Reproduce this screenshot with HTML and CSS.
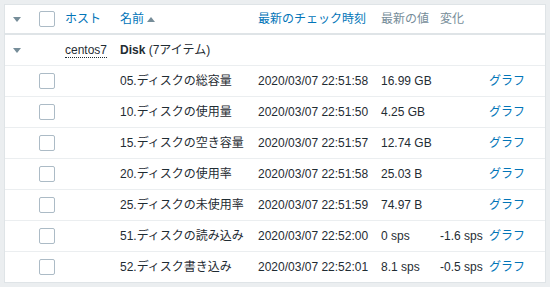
FILE: index.html
```html
<!DOCTYPE html>
<html>
<head>
<meta charset="UTF-8">
<title>最新データ</title>
<link rel="stylesheet" href="styles.css">
</head>
<body>
<div class="panel">
<table class="list">
<colgroup>
<col class="c-tog"><col class="c-cb"><col class="c-host"><col class="c-name"><col class="c-time"><col class="c-val"><col class="c-chg"><col class="c-graph">
</colgroup>
<thead>
<tr>
<th><span class="arrow"></span></th>
<th><span class="cb"></span></th>
<th><a href="#">ホスト</a></th>
<th><a href="#">名前</a><span class="sort"></span></th>
<th><a href="#">最新のチェック時刻</a></th>
<th class="plain">最新の値</th>
<th class="plain">変化</th>
<th></th>
</tr>
</thead>
<tbody>
<tr class="group">
<td><span class="arrow"></span></td>
<td></td>
<td><span class="host">centos7</span></td>
<td colspan="5"><b>Disk</b> (7アイテム)</td>
</tr>
<tr><td></td><td><span class="cb"></span></td><td></td><td>05.ディスクの総容量</td><td>2020/03/07 22:51:58</td><td>16.99 GB</td><td></td><td><a href="#">グラフ</a></td></tr>
<tr><td></td><td><span class="cb"></span></td><td></td><td>10.ディスクの使用量</td><td>2020/03/07 22:51:50</td><td>4.25 GB</td><td></td><td><a href="#">グラフ</a></td></tr>
<tr><td></td><td><span class="cb"></span></td><td></td><td>15.ディスクの空き容量</td><td>2020/03/07 22:51:57</td><td>12.74 GB</td><td></td><td><a href="#">グラフ</a></td></tr>
<tr><td></td><td><span class="cb"></span></td><td></td><td>20.ディスクの使用率</td><td>2020/03/07 22:51:58</td><td>25.03 B</td><td></td><td><a href="#">グラフ</a></td></tr>
<tr><td></td><td><span class="cb"></span></td><td></td><td>25.ディスクの未使用率</td><td>2020/03/07 22:51:59</td><td>74.97 B</td><td></td><td><a href="#">グラフ</a></td></tr>
<tr><td></td><td><span class="cb"></span></td><td></td><td>51.ディスクの読み込み</td><td>2020/03/07 22:52:00</td><td>0 sps</td><td>-1.6 sps</td><td><a href="#">グラフ</a></td></tr>
<tr><td></td><td><span class="cb"></span></td><td></td><td>52.ディスク書き込み</td><td>2020/03/07 22:52:01</td><td>8.1 sps</td><td>-0.5 sps</td><td><a href="#">グラフ</a></td></tr>
</tbody>
</table>
</div>
</body>
</html>
```
FILE: styles.css
```css
html{
    background:#ebeef0;
}
body{
    margin:4px;
    font-family:"Liberation Sans", Arial, "Noto Sans CJK JP", sans-serif;
    font-size:12px;
    line-height:14px;
    color:#1f2c33;
}
.panel{
    width:540px;
    background:#fff;
    border:1px solid #dfe4e7;
}
.list{
    width:540px;
    border-collapse:collapse;
    table-layout:fixed;
    font-size:12px;
}
.c-tog{width:29px;}
.c-cb{width:26px;}
.c-host{width:55px;}
.c-name{width:138px;}
.c-time{width:123px;}
.c-val{width:59px;}
.c-chg{width:49px;}
.c-graph{width:61px;}
th, td{
    padding:0 5px;
    text-align:left;
    vertical-align:middle;
    white-space:nowrap;
    overflow:hidden;
}
th{
    height:28px;
    font-weight:normal;
    border-bottom:2px solid #dfe4e7;
    color:#768d99;
}
td{
    height:30px;
    border-bottom:1px solid #ebeef0;
}
tbody tr:last-child td{
    border-bottom:none;
}
th:first-child, td:first-child{
    padding-left:8px;
}
a{
    color:#0275b8;
    text-decoration:none;
}
.arrow{
    display:inline-block;
    width:0;
    height:0;
    border-left:4px solid transparent;
    border-right:4px solid transparent;
    border-top:5px solid #768d99;
    vertical-align:middle;
}
.sort{
    display:inline-block;
    width:0;
    height:0;
    margin-left:3px;
    border-left:4px solid transparent;
    border-right:4px solid transparent;
    border-bottom:5px solid #768d99;
    vertical-align:1px;
}
.cb{
    display:block;
    width:14px;
    height:14px;
    border:1px solid #acbbc6;
    border-radius:2px;
    background:#fff;
}
.host{
    border-bottom:1px dotted #1f2c33;
}
.group b{
    font-weight:bold;
}
```
